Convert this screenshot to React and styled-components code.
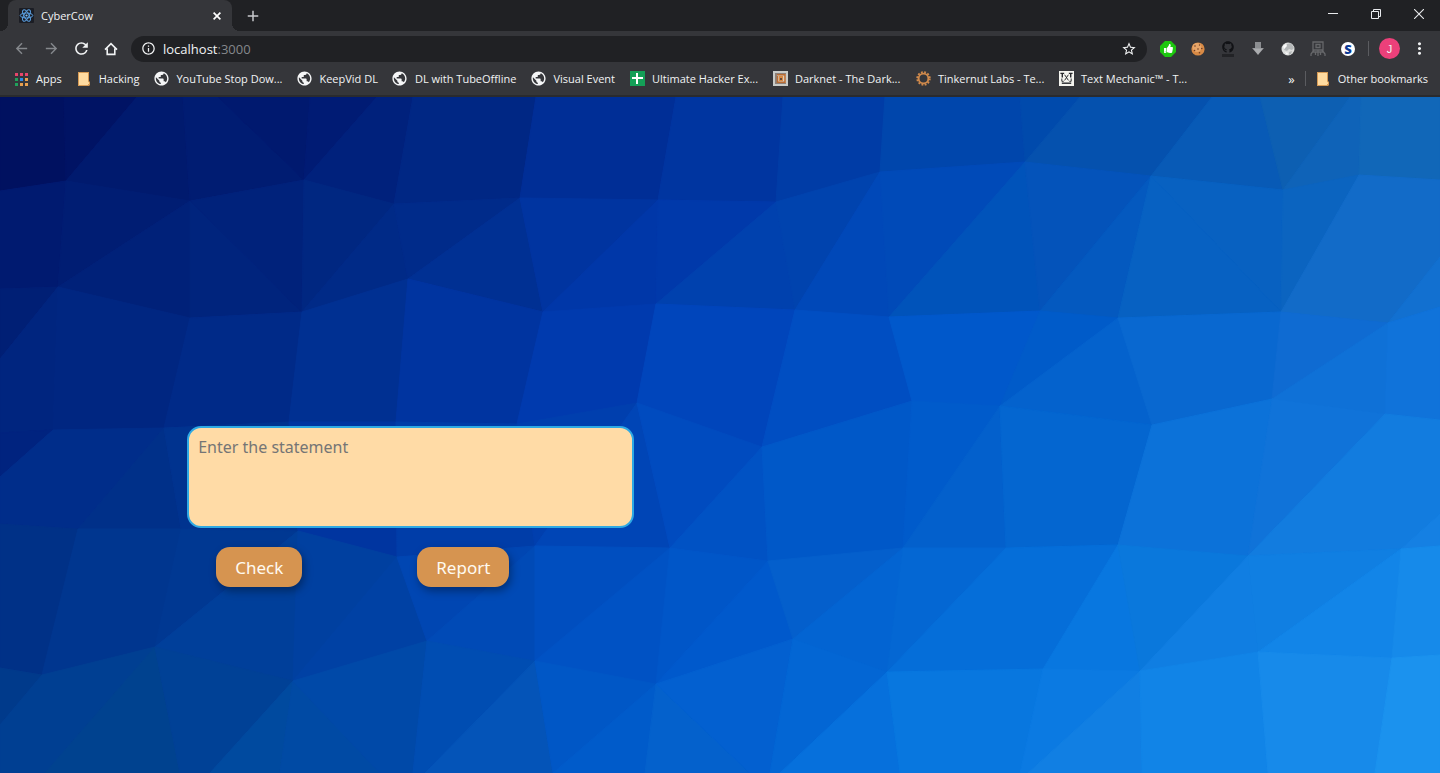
import styled, { createGlobalStyle, css } from "styled-components";
import {
    MdAdd,
    MdArrowBack,
    MdArrowForward,
    MdInfoOutline,
    MdMoreVert,
    MdPublic,
    MdRefresh,
    MdStarBorder,
} from "react-icons/md";
import { FaGithub, FaThumbsUp } from "react-icons/fa";

const colors = {
    Frame: "#202124",
    Toolbar: "#35363a",
    Text: "#f1f3f4",
    Muted: "#85888c",
    Field: "#ffdba6",
    FieldBorder: "#2ea9e4",
    Button: "#d69450",
};

// background facets: [color, points]
const facets = [
    ["#001160", "0,0 64,0 66,84 0,94"],
    ["#001364", "64,0 137,0 66,84"],
    ["#001a6e", "137,0 183,0 190,104 66,84"],
    ["#001c72", "183,0 218,0 304,83 190,104"],
    ["#00196f", "218,0 310,0 304,83"],
    ["#001b74", "310,0 377,0 304,83"],
    ["#00217c", "377,0 413,0 394,107 304,83"],
    ["#002784", "413,0 536,0 520,101 394,107"],
    ["#002e96", "536,0 676,0 658,103 520,101"],
    ["#0035a0", "676,0 783,0 776,105 658,103"],
    ["#003ca6", "783,0 885,0 880,75 776,105"],
    ["#0046ac", "885,0 1020,0 1025,65 880,75"],
    ["#004aac", "1020,0 1080,0 1025,65"],
    ["#0551ae", "1080,0 1212,0 1151,79 1025,65"],
    ["#085ab6", "1212,0 1260,0 1283,93 1151,79"],
    ["#0d5fb2", "1260,0 1350,0 1283,93"],
    ["#0f63b8", "1350,0 1361,0 1359,78 1283,93"],
    ["#1167b8", "1361,0 1440,0 1440,83 1359,78"],

    ["#001a70", "0,94 66,84 58,190 0,192"],
    ["#001d73", "66,84 190,104 58,190"],
    ["#002179", "190,104 190,221 58,190"],
    ["#00247d", "190,104 302,215 190,221"],
    ["#00227b", "190,104 304,83 302,215"],
    ["#002781", "304,83 394,107 302,215"],
    ["#002a87", "394,107 408,182 302,215"],
    ["#002b8a", "394,107 520,101 408,182"],
    ["#003093", "520,101 543,215 408,182"],
    ["#0034a0", "520,101 658,103 543,215"],
    ["#0037a8", "658,103 656,207 543,215"],
    ["#0039aa", "658,103 776,105 656,207"],
    ["#0041ae", "776,105 795,213 656,207"],
    ["#0043ae", "776,105 880,75 795,213"],
    ["#0048b8", "880,75 889,220 795,213"],
    ["#004ab8", "880,75 1025,65 889,220"],
    ["#0053ba", "1025,65 1040,214 889,220"],
    ["#0453ba", "1025,65 1151,79 1040,214"],
    ["#0459bf", "1151,79 1118,221 1040,214"],
    ["#0861c1", "1151,79 1283,93 1281,215"],
    ["#0761c2", "1151,79 1281,215 1118,221"],
    ["#0b64c0", "1283,93 1359,78 1281,215"],
    ["#126bc8", "1359,78 1440,83 1440,160 1388,226 1281,215"],
    ["#1270d0", "1440,160 1440,210 1388,226"],

    ["#001f75", "0,192 58,190 0,262"],
    ["#00257f", "58,190 53,333 0,336 0,262"],
    ["#002681", "58,190 190,221 164,331 53,333"],
    ["#002a88", "190,221 302,215 289,325 164,331"],
    ["#003092", "302,215 408,182 396,325 289,325"],
    ["#0034a0", "408,182 543,215 517,327 396,325"],
    ["#003aae", "543,215 656,207 637,306 517,327"],
    ["#0045bb", "656,207 795,213 762,350 637,306"],
    ["#004ec2", "795,213 889,220 912,304 762,350"],
    ["#0058cb", "889,220 1040,214 1000,309 912,304"],
    ["#005bc9", "1040,214 1118,221 1000,309"],
    ["#0462cd", "1118,221 1152,328 1000,309"],
    ["#0968d0", "1118,221 1281,215 1272,302 1152,328"],
    ["#0f6bd2", "1281,215 1388,226 1272,302"],
    ["#0f71d7", "1388,226 1385,317 1272,302"],
    ["#1073da", "1388,226 1440,210 1440,323 1385,317"],

    ["#00237f", "0,336 53,333 0,380"],
    ["#002d8a", "53,333 164,331 78,432 0,427 0,380"],
    ["#003089", "164,331 181,432 78,432"],
    ["#00338f", "164,331 289,325 298,434 181,432"],
    ["#0035a0", "289,325 396,325 397,460 298,434"],
    ["#003da8", "396,325 517,327 535,449 397,460"],
    ["#003fae", "517,327 637,306 535,449"],
    ["#0045b6", "637,306 670,451 535,449"],
    ["#004bbf", "637,306 762,350 670,451"],
    ["#0052c4", "762,350 768,464 670,451"],
    ["#0058c8", "762,350 912,304 903,451 768,464"],
    ["#005bcb", "912,304 1000,309 903,451"],
    ["#0360cc", "1000,309 1006,451 903,451"],
    ["#0466d0", "1000,309 1152,328 1118,448 1006,451"],
    ["#0c72d9", "1152,328 1272,302 1248,459 1118,448"],
    ["#1073d9", "1272,302 1385,317 1248,459"],
    ["#127cdf", "1385,317 1440,323 1440,417 1401,452 1248,459"],
    ["#1580e3", "1440,417 1440,449 1401,452"],

    ["#003187", "0,427 78,432 42,578 0,571"],
    ["#00368f", "78,432 181,432 155,550 42,578"],
    ["#003892", "181,432 298,434 155,550"],
    ["#003f9a", "298,434 293,584 155,550"],
    ["#0040a0", "298,434 397,460 293,584"],
    ["#0041a4", "397,460 427,544 293,584"],
    ["#0046b2", "397,460 535,449 427,544"],
    ["#004ab6", "535,449 535,564 427,544"],
    ["#004ebf", "535,449 670,451 535,564"],
    ["#0052c4", "670,451 656,587 535,564"],
    ["#0056c8", "670,451 768,464 656,587"],
    ["#0059cc", "768,464 793,542 656,587"],
    ["#045fcc", "768,464 903,451 793,542"],
    ["#0364d2", "903,451 887,575 793,542"],
    ["#0467d3", "903,451 1006,451 887,575"],
    ["#056ed9", "1006,451 1118,448 1043,572 887,575"],
    ["#0877e0", "1118,448 1140,574 1043,572"],
    ["#0a78dc", "1118,448 1248,459 1140,574"],
    ["#107ee2", "1248,459 1258,555 1140,574"],
    ["#107fe2", "1248,459 1401,452 1258,555"],
    ["#1285e8", "1401,452 1392,561 1258,555"],
    ["#168aea", "1401,452 1440,449 1440,558 1392,561"],

    ["#003a8b", "0,571 42,578 0,628"],
    ["#003f92", "42,578 155,550 45,676 0,676 0,628"],
    ["#00428f", "155,550 180,676 45,676"],
    ["#004196", "155,550 293,584 210,676 180,676"],
    ["#004a9f", "293,584 280,676 210,676"],
    ["#004aa4", "293,584 380,676 280,676"],
    ["#0049a8", "293,584 427,544 413,676 380,676"],
    ["#004db2", "427,544 535,564 425,676 413,676"],
    ["#0454b8", "535,564 553,676 425,676"],
    ["#0057c6", "535,564 656,587 553,676"],
    ["#005bca", "656,587 645,676 553,676"],
    ["#0461cc", "656,587 750,676 645,676"],
    ["#0360d0", "656,587 793,542 770,676 750,676"],
    ["#0366d4", "793,542 887,575 780,676 770,676"],
    ["#0670dc", "887,575 900,676 780,676"],
    ["#0877df", "887,575 1043,572 1020,676 900,676"],
    ["#0b7ae2", "1043,572 1140,574 1028,676 1020,676"],
    ["#117fe3", "1140,574 1142,676 1028,676"],
    ["#1184e7", "1140,574 1258,555 1268,676 1142,676"],
    ["#178aea", "1258,555 1392,561 1375,676 1268,676"],
    ["#1b92ee", "1392,561 1440,558 1440,676 1375,676"],
];

const ReactLogo = () => (
    <svg width="15" height="15" viewBox="0 0 15 15" fill="none" stroke="#5a9fe0">
        <rect width="15" height="15" rx="1" fill="#1b1d24" stroke="none" />
        <ellipse cx="7.5" cy="7.5" rx="6.3" ry="2.5" />
        <ellipse cx="7.5" cy="7.5" rx="6.3" ry="2.5" transform="rotate(60 7.5 7.5)" />
        <ellipse cx="7.5" cy="7.5" rx="6.3" ry="2.5" transform="rotate(120 7.5 7.5)" />
        <circle cx="7.5" cy="7.5" r="1.1" fill="#7fbdf0" stroke="none" />
    </svg>
);

const CloseIcon = () => (
    <svg width="8" height="8" viewBox="0 0 8 8" stroke="#fff" strokeWidth="1.7">
        <path d="m.6.6 6.800 6.800M7.400.6.6 7.400" />
    </svg>
);

const HomeIcon = () => (
    <svg width="14" height="14" viewBox="0 0 14 14" fill="none" stroke="#f1f3f4" strokeWidth="1.6">
        <path d="M1 7.6 7 1.7l6 5.9M3.2 6.5v5.9h7.6V6.5" />
    </svg>
);

const AppsIcon = () => (
    <svg width="14" height="14" viewBox="0 0 14 14">
        <path fill="#e8456b" d="M1 1h3v3H1zM6 1h3v3H6zM11 1h3v3h-3z" />
        <path fill="#21a25b" d="M1 6h3v3H1zM1 11h3v3H1z" />
        <path fill="#2b8ae8" d="M6 6h3v3H6z" />
        <path fill="#e9a04f" d="M11 6h3v3h-3zM6 11h3v3H6zM11 11h3v3h-3z" />
    </svg>
);

const FolderIcon = () => (
    <svg width="14" height="14" viewBox="0 0 14 14">
        <path fill="#d79b55" d="M1 0h11v9l1 1v3l-1 1H1z" />
        <path fill="#ffdba0" d="M2 1h9v8.5l1 1V12h-1v1H2z" />
    </svg>
);

const GlobeIcon = () => <MdPublic size={17} color="#f5f6f7" />;

const SheetIcon = () => (
    <svg width="15" height="15" viewBox="0 0 15 15">
        <path fill="#149f57" d="M0 0h15v15H0z" />
        <path fill="#fff" d="M2 6h11v2H2zM6 2h2v11H6z" />
    </svg>
);

const DarknetIcon = () => (
    <svg width="15" height="15" viewBox="0 0 15 15" fill="none">
        <path fill="#c9cbc8" d="M0 0h15v15H0z" />
        <path fill="#8d8078" d="M2 2h11v11H2z" />
        <path fill="#d9cbbb" d="M4 3h9v9H4z" />
        <path stroke="#b96c33" strokeWidth="1.5" d="M4 3.8h8v7.5H4.5V5" />
        <path fill="#d98a43" d="M6 5h4v5H6z" />
        <path fill="#63493a" d="M7 7h2v2H7z" />
    </svg>
);

const GearIcon = () => (
    <svg width="15" height="15" viewBox="0 0 16 16" fill="none" stroke="#d08a4c">
        <circle cx="8" cy="8" r="6.7" strokeWidth="2" strokeDasharray="2 1.5" />
        <circle cx="8" cy="8" r="5.2" strokeWidth="2" />
    </svg>
);

const MechanicIcon = () => (
    <svg width="15" height="15" viewBox="0 0 16 16" fill="none" stroke="#26272b">
        <path fill="#f4f4ef" stroke="none" d="M0 0h16v16H0z" />
        <path strokeWidth="1.5" d="M1.5 2.5h4M3.5 2v5M10.5 2.5h4M12.5 2v5" />
        <path d="m6 4 4 6M10 4l-4 6M3 8v3h2M13 8v3h-2" />
        <path strokeWidth="1.5" d="M3 13h10" />
    </svg>
);

const ThumbIcon = () => (
    <svg width="16" height="16" viewBox="0 0 16 16">
        <path fill="#1dc70f" d="M5 0h6l5 5v6l-5 5H5l-5-5V5z" />
        <FaThumbsUp x="4" y="3" size={9} color="#fff" />
    </svg>
);

const CookieIcon = () => (
    <svg width="14" height="14" viewBox="0 0 14 14">
        <circle cx="7" cy="7" r="6.6" fill="#d88a45" />
        <circle cx="6" cy="5.5" r="4.5" fill="#e7a568" />
        <g fill="#6d3b22">
            <circle cx="4" cy="4" r=".8" />
            <circle cx="8.5" cy="3" r=".7" />
            <circle cx="7" cy="7" r=".8" />
            <circle cx="3.5" cy="8.5" r=".8" />
            <circle cx="10.8" cy="6.5" r=".8" />
            <circle cx="8.5" cy="10.8" r=".8" />
        </g>
    </svg>
);

const GithubIcon = () => (
    <svg width="16" height="16" viewBox="0 0 16 16">
        <FaGithub x="2" y="0" size={12} color="#111215" />
        <path fill="#222326" d="M2 13h12v3H2z" />
    </svg>
);

const DownloadIcon = () => (
    <svg width="12" height="15" viewBox="0 0 12 15">
        <path fill="#8b8d90" d="M3 1h6v6h3l-6 7-6-7h3z" />
        <path fill="#aaacae" d="M1 7.5h10l-5 6z" />
    </svg>
);

const BallIcon = () => (
    <svg width="14" height="14" viewBox="0 0 14 14">
        <circle cx="7" cy="7" r="6.5" fill="#dcdedd" />
        <path fill="#b4b7b8" d="M6 2 10 1l3 5-2 2-3-1-2 2-3-1zM8 10l3-1-1 3-2 1z" />
        <path fill="#fafafa" d="m2 4 3-2 1 2-3 3zM4 10l3 1-1 2z" />
    </svg>
);

const ScaffoldIcon = () => (
    <svg width="16" height="16" viewBox="0 0 16 16" fill="none" stroke="#66676a" strokeWidth="1.3">
        <path d="M3 1h10v8H3zM6 3.5h4v3H6zM8 9v6M3 11h10M4 9l-3 4v2M12 9l3 4v2M5.5 11v3M10.5 11v3" />
    </svg>
);

const RestoreIcon = () => (
    <svg width="10" height="10" viewBox="0 0 10 10" fill="none" stroke="#e8eaed">
        <path d="M.5 2.5h7v7h-7zM2.5 2.5v-2h7v7h-2" />
    </svg>
);

const MinimizeIcon = () => (
    <svg width="10" height="10" viewBox="0 0 10 10" stroke="#e8eaed">
        <path d="M0 4.5h10" />
    </svg>
);

const CloseWindowIcon = () => (
    <svg width="10" height="10" viewBox="0 0 10 10" stroke="#e8eaed" strokeWidth="1.1">
        <path d="m0 0 10 10M10 0 0 10" />
    </svg>
);

const bookmarks = [
    { title: "Apps", Icon: AppsIcon },
    { title: "Hacking", Icon: FolderIcon },
    { title: "YouTube Stop Dow...", Icon: GlobeIcon, cut: true },
    { title: "KeepVid DL", Icon: GlobeIcon },
    { title: "DL with TubeOffline", Icon: GlobeIcon },
    { title: "Visual Event", Icon: GlobeIcon },
    { title: "Ultimate Hacker Ex...", Icon: SheetIcon, cut: true },
    { title: "Darknet - The Dark...", Icon: DarknetIcon, cut: true },
    { title: "Tinkernut Labs - Te...", Icon: GearIcon, cut: true },
    { title: "Text Mechanic™ - T...", Icon: MechanicIcon, cut: true },
];

const extensions = [
    { label: "Like", Icon: ThumbIcon },
    { label: "Cookies", Icon: CookieIcon },
    { label: "GitHub", Icon: GithubIcon },
    { label: "Download", Icon: DownloadIcon },
    { label: "Globe", Icon: BallIcon },
    { label: "Builder", Icon: ScaffoldIcon },
];

const App = () => {
    return (
        <Browser>
            <GlobalStyle />
            <TabStrip>
                <Tab>
                    <ReactLogo />
                    <TabTitle>CyberCow</TabTitle>
                    <TabButton aria-label="Close tab"><CloseIcon /></TabButton>
                </Tab>
                <NewTab aria-label="New tab"><MdAdd size={18} /></NewTab>
                <WindowControls>
                    <WindowButton aria-label="Minimize"><MinimizeIcon /></WindowButton>
                    <WindowButton aria-label="Restore"><RestoreIcon /></WindowButton>
                    <WindowButton aria-label="Close"><CloseWindowIcon /></WindowButton>
                </WindowControls>
            </TabStrip>
            <Toolbar>
                <ToolButton $muted aria-label="Back"><MdArrowBack size={17} /></ToolButton>
                <ToolButton $muted aria-label="Forward"><MdArrowForward size={17} /></ToolButton>
                <ToolButton aria-label="Reload"><MdRefresh size={19} /></ToolButton>
                <ToolButton aria-label="Home"><HomeIcon /></ToolButton>
                <AddressBar>
                    <MdInfoOutline size={15} />
                    <Address>localhost<Port>:3000</Port></Address>
                    <ToolButton aria-label="Bookmark this page"><MdStarBorder size={16} /></ToolButton>
                </AddressBar>
                {extensions.map(({ label, Icon }) => (
                    <ToolButton key={label} aria-label={label}><Icon /></ToolButton>
                ))}
                <ToolButton aria-label="S extension"><Badge>S</Badge></ToolButton>
                <Divider />
                <Avatar aria-label="Profile">J</Avatar>
                <ToolButton aria-label="Menu"><MdMoreVert size={19} /></ToolButton>
            </Toolbar>
            <BookmarksBar>
                {bookmarks.map(({ title, Icon, cut }) => (
                    <Bookmark key={title} href="#">
                        <IconBox><Icon /></IconBox>
                        <BookmarkTitle $cut={cut}>{title}</BookmarkTitle>
                    </Bookmark>
                ))}
                <More aria-label="More bookmarks">»</More>
                <Divider />
                <Bookmark href="#">
                    <IconBox><FolderIcon /></IconBox>
                    <BookmarkTitle>Other bookmarks</BookmarkTitle>
                </Bookmark>
            </BookmarksBar>
            <Page>
                <Backdrop viewBox="0 0 1440 676" preserveAspectRatio="xMidYMid slice" aria-hidden="true">
                    {facets.map(([color, points]) => (
                        <polygon key={points} points={points} fill={color} stroke={color} />
                    ))}
                </Backdrop>
                <Form onSubmit={(e) => e.preventDefault()}>
                    <Statement aria-label="Statement" placeholder="Enter the statement" />
                    <Actions>
                        <ActionButton type="submit">Check</ActionButton>
                        <ActionButton type="button">Report</ActionButton>
                    </Actions>
                </Form>
            </Page>
        </Browser>
    );
}

const GlobalStyle = createGlobalStyle`
    * {
        box-sizing: border-box;
    }

    body {
        margin: 0;
        font-family: "Open Sans", "Noto Sans", sans-serif;
        font-size: 11px;
        color: ${colors.Text};
    }
`;

const centered = css`
    display: flex;
    align-items: center;
    justify-content: center;
    flex-shrink: 0;
`;

const baseButton = css`
    ${centered}
    border: none;
    padding: 0;
    background: none;
    color: inherit;
    font: inherit;
    cursor: pointer;
`;

const Browser = styled.div`
    display: flex;
    flex-direction: column;
    min-height: 100vh;
`;

const TabStrip = styled.div`
    display: flex;
    height: 31px;
    padding-left: 8px;
    background-color: ${colors.Frame};
`;

const Tab = styled.div`
    position: relative;
    display: flex;
    align-items: center;
    width: 224px;
    padding: 0 8px 0 11px;
    gap: 7px;
    border-radius: 8px 8px 0 0;
    background-color: ${colors.Toolbar};

    &::before,
    &::after {
        content: "";
        position: absolute;
        bottom: 0;
        width: 8px;
        height: 8px;
    }

    &::before {
        right: 100%;
        background: radial-gradient(circle at 0 0, transparent 8px, ${colors.Toolbar} 8px);
    }

    &::after {
        left: 100%;
        background: radial-gradient(circle at 100% 0, transparent 8px, ${colors.Toolbar} 8px);
    }
`;

const TabTitle = styled.span`
    flex: 1;
`;

const TabButton = styled.button`
    ${baseButton}
    width: 14px;
    height: 16px;
`;

const NewTab = styled.button`
    ${baseButton}
    width: 42px;
    color: #c6c8cb;
`;

const WindowControls = styled.div`
    display: flex;
    height: 28px;
    margin-left: auto;
`;

const WindowButton = styled.button`
    ${baseButton}
    width: 43px;
`;

const Toolbar = styled.div`
    display: flex;
    align-items: center;
    height: 35px;
    padding: 0 6px;
    background-color: ${colors.Toolbar};
`;

const ToolButton = styled.button`
    ${baseButton}
    width: 30px;
    height: 24px;
    color: ${(props) => (props.$muted ? colors.Muted : colors.Text)};
`;

const AddressBar = styled.div`
    display: flex;
    align-items: center;
    flex: 1;
    height: 26px;
    margin: 0 6px 0 5px;
    padding: 0 3px 0 10px;
    border-radius: 13px;
    background-color: ${colors.Frame};
`;

const Address = styled.span`
    flex: 1;
    margin-left: 7px;
    font-size: 13px;
`;

const Port = styled.span`
    color: ${colors.Muted};
`;

const Badge = styled.span`
    ${centered}
    width: 14px;
    height: 14px;
    border-radius: 50%;
    background-color: #fff;
    color: #0b3a94;
    font-size: 13px;
    font-weight: 800;
    line-height: 14px;
`;

const Divider = styled.span`
    flex-shrink: 0;
    width: 1px;
    height: 15px;
    margin: 0 10px 0 5px;
    background-color: #5b5c60;
`;

const Avatar = styled.button`
    ${baseButton}
    width: 21px;
    height: 21px;
    margin-right: 4px;
    border-radius: 50%;
    background-color: #ec407a;
    font-family: "Liberation Sans", sans-serif;
`;

const BookmarksBar = styled.nav`
    display: flex;
    align-items: center;
    gap: 15px;
    height: 31px;
    padding: 0 12px 6px 14px;
    background-color: ${colors.Toolbar};
    box-shadow: inset 0 -2px #2a2b2e;

    ${Divider} {
        margin: 0 -5px;
    }
`;

const Bookmark = styled.a`
    display: flex;
    align-items: center;
    gap: 8px;
    color: inherit;
    text-decoration: none;
    white-space: nowrap;
`;

const IconBox = styled.span`
    ${centered}
    width: 14px;
    height: 16px;

    svg {
        flex-shrink: 0;
    }
`;

const BookmarkTitle = styled.span`
    width: ${(props) => (props.$cut ? "106px" : "auto")};
`;

const More = styled.button`
    ${baseButton}
    margin-left: auto;
    font-size: 13px;
    line-height: 16px;
`;

const Page = styled.main`
    position: relative;
    flex: 1;
    padding: 329px 0 40px 13%;
    overflow: hidden;
    background-color: #0052c4;
`;

const Backdrop = styled.svg`
    position: absolute;
    inset: 0;
    width: 100%;
    height: 100%;
`;

const Form = styled.form`
    position: relative;
    width: 36%;
    min-width: 320px;
    font-family: "Noto Sans", sans-serif;
`;

const Statement = styled.textarea`
    display: block;
    width: 99%;
    height: 102px;
    padding: 7px 9px;
    border: 2px solid ${colors.FieldBorder};
    border-radius: 14px;
    outline: none;
    resize: none;
    background-color: ${colors.Field};
    color: #333;
    font-family: inherit;
    font-size: 16px;
    line-height: 24px;

    &::placeholder {
        color: #757575;
    }
`;

const Actions = styled.div`
    display: flex;
    gap: 115px;
    margin: 19px 0 0 29px;
`;

const ActionButton = styled.button`
    ${baseButton}
    height: 40px;
    padding: 0 19px;
    border-radius: 14px;
    background-color: ${colors.Button};
    box-shadow: 2px 4px 8px rgba(0, 0, 0, 0.35);
    color: #fffaf0;
    font-size: 17px;
`;

export default App;
